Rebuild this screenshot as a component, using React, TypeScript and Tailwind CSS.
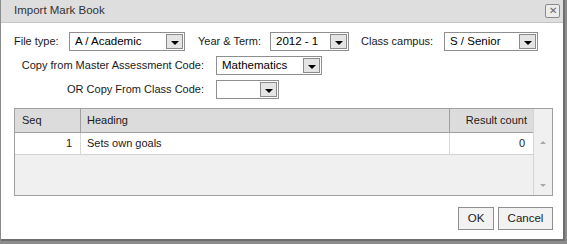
function Select({ value, width }: { value: string; width: string }) {
  return (
    <div className={`${width} h-[19px] flex items-stretch border border-[#8e8e8e] bg-white`}>
      <div className="flex-1 pl-[5px] leading-[17px] text-[11.5px] text-black whitespace-nowrap overflow-hidden">{value}</div>
      <div className="w-[17px] m-[1px] border border-[#8a8a8a] bg-[#e4e4e4] flex items-center justify-center">
        <div className="w-0 h-0 border-l-[4px] border-r-[4px] border-t-[4px] border-l-transparent border-r-transparent border-t-black mt-[2px]" />
      </div>
    </div>
  )
}

export default function App() {
  return (
    <div className="w-[567px] h-[244px] bg-[#8c8c8c] font-['Liberation_Sans',Arial,sans-serif] text-[11px] text-[#1a1a1a] overflow-hidden whitespace-nowrap">
      <div className="ml-[1px] w-[564px] h-[241px] bg-white border-r-[2px] border-b-[2px] border-[#6e6e6e] flex flex-col">
        {/* title bar */}
        <div className="h-[23px] bg-[#dedede] border-b border-[#c4c4c4] flex items-center justify-between pl-[13px] pr-[3px] shrink-0">
          <span className="text-[#333] text-[11.5px]">Import Mark Book</span>
          <div className="w-[15px] h-[14px] border border-[#8c8c8c] rounded-[2px] bg-[#ececec] flex items-center justify-center text-[#666] text-[10px] leading-none">
            ✕
          </div>
        </div>

        {/* filters */}
        <div className="pl-[13px] pt-[9px] flex flex-col gap-[5px]">
          <div className="flex items-center">
            <span className="w-[55px]">File type:</span>
            <Select value="A / Academic" width="w-[116px]" />
            <span className="ml-[13px] w-[72px]">Year &amp; Term:</span>
            <Select value="2012 - 1" width="w-[79px]" />
            <span className="ml-[12px] w-[83px]">Class campus:</span>
            <Select value="S / Senior" width="w-[94px]" />
          </div>
          <div className="flex items-center">
            <span className="w-[190px] text-right">Copy from Master Assessment Code:</span>
            <div className="ml-[12px]">
              <Select value="Mathematics" width="w-[106px]" />
            </div>
          </div>
          <div className="flex items-center">
            <span className="w-[190px] text-right">OR Copy From Class Code:</span>
            <div className="ml-[12px]">
              <Select value="" width="w-[63px]" />
            </div>
          </div>
        </div>

        {/* grid */}
        <div className="ml-[13px] mt-[9px] w-[539px] h-[88px] border border-[#a0a0a0] flex">
          <div className="flex-1 flex flex-col">
            <div className="h-[24px] bg-[#dcdcdc] border-b border-[#a0a0a0] flex">
              <div className="w-[66px] border-r border-[#a0a0a0] pl-[7px] flex items-center">Seq</div>
              <div className="w-[369px] border-r border-[#a0a0a0] pl-[6px] flex items-center">Heading</div>
              <div className="flex-1 pr-[6px] flex items-center justify-end">Result count</div>
            </div>
            <div className="h-[22px] bg-white border-b border-[#d2d2d2] flex">
              <div className="w-[66px] border-r border-[#d8d8d8] pr-[8px] flex items-center justify-end">1</div>
              <div className="w-[369px] border-r border-[#d8d8d8] pl-[6px] flex items-center">Sets own goals</div>
              <div className="flex-1 pr-[8px] flex items-center justify-end">0</div>
            </div>
            <div className="flex-1 bg-[#f0f0f0]" />
          </div>
          <div className="w-[19px] bg-[#f0f0f0] border-l border-[#d4d4d4] flex flex-col items-center pt-[32px] pb-[8px] justify-between">
            <div className="w-0 h-0 border-l-[3px] border-r-[3px] border-b-[3px] border-l-transparent border-r-transparent border-b-[#a8a8a8]" />
            <div className="w-0 h-0 border-l-[3px] border-r-[3px] border-t-[3px] border-l-transparent border-r-transparent border-t-[#a8a8a8]" />
          </div>
        </div>

        {/* buttons */}
        <div className="mt-[11px] pr-[10px] flex justify-end gap-[4px]">
          <button className="w-[36px] h-[23px] border border-[#8e8e8e] bg-[#f2f2f2] text-[11.5px] text-[#1a1a1a]">OK</button>
          <button className="w-[55px] h-[23px] border border-[#8e8e8e] bg-[#f2f2f2] text-[11.5px] text-[#1a1a1a]">Cancel</button>
        </div>
      </div>
    </div>
  )
}
